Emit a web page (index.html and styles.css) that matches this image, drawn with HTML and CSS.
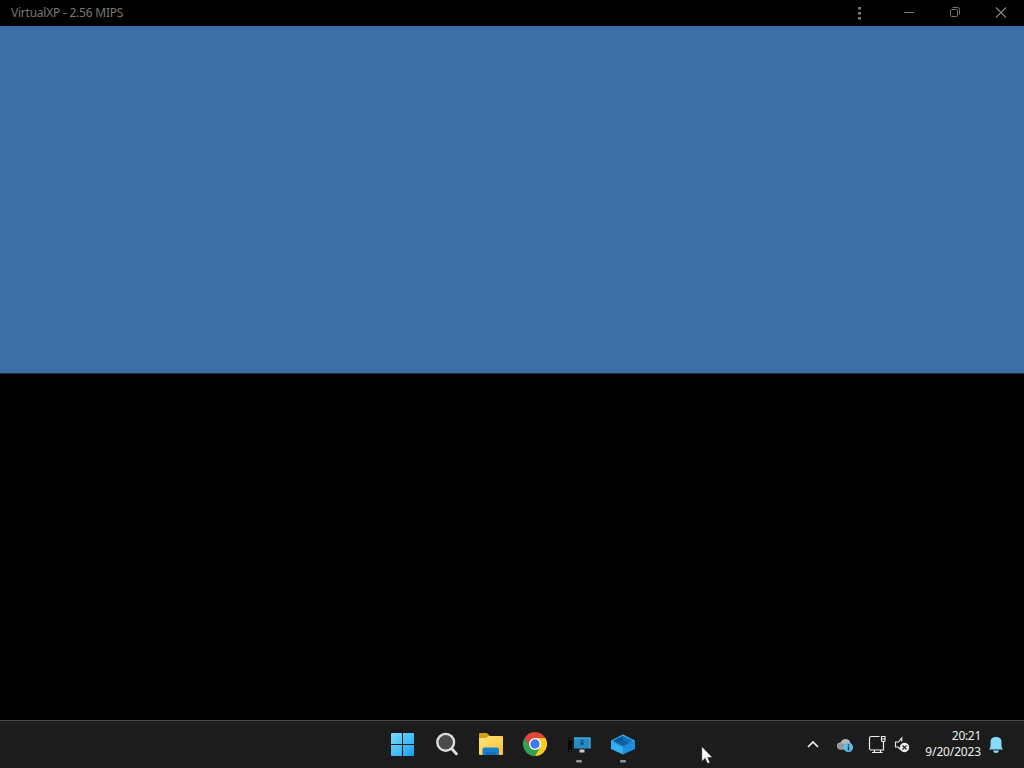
FILE: index.html
```html
<!DOCTYPE html>
<html lang="en">
<head>
<meta charset="utf-8">
<title>VirtualXP - 2.56 MIPS</title>
<link rel="stylesheet" href="styles.css">
</head>
<body>
<div class="desktop">
  <header class="titlebar">
    <span class="title">VirtualXP - 2.56 MIPS</span>
    <div class="controls">
      <svg class="control" viewBox="0 0 46 26"><g fill="#777"><rect x="22" y="7" width="3" height="2.6"/><rect x="22" y="12" width="3" height="2.6"/><rect x="22" y="17" width="3" height="2.6"/></g></svg>
      <svg class="control" viewBox="0 0 46 26"><path d="M18 12.5h10" stroke="#777"/></svg>
      <svg class="control" viewBox="0 0 46 26"><g fill="none" stroke="#777"><rect x="18.5" y="9.5" width="7" height="7" rx="1.2"/><path d="M20.5 7.5h5a2 2 0 0 1 2 2v5"/></g></svg>
      <svg class="control" viewBox="0 0 46 26"><path d="M18 7.5l10 10m0-10l-10 10" stroke="#858585" stroke-width="1.1"/></svg>
    </div>
  </header>
  <main class="screen"></main>
  <footer class="taskbar">
    <nav class="apps">
      <svg class="app" viewBox="0 0 44 47">
        <defs><linearGradient id="win" gradientUnits="userSpaceOnUse" x1="11" y1="12" x2="34" y2="35"><stop offset="0" stop-color="#7ddcfb"/><stop offset="1" stop-color="#159ff0"/></linearGradient></defs>
        <path fill="url(#win)" d="M11 13q0-1 1-1h10v11H11zM23 12h10q1 0 1 1v10H23zM11 24h11v11H12q-1 0-1-1zM23 24h11v10q0 1-1 1H23z"/>
      </svg>
      <svg class="app" viewBox="0 0 44 47">
        <circle cx="21.7" cy="21.3" r="8.4" fill="#4a4a4a" stroke="#dedede" stroke-width="2.4"/>
        <path d="M28 28l4.3 4.8" stroke="#dedede" stroke-width="2.9" stroke-linecap="round"/>
      </svg>
      <svg class="app" viewBox="0 0 44 47">
        <defs><linearGradient id="folder" x2="1" y2="1"><stop stop-color="#ffe37b"/><stop offset="1" stop-color="#f8c236"/></linearGradient></defs>
        <path fill="#d69c16" d="M11 13q0-1 1-1h6q1 0 2 1l2 2v5H11z"/>
        <path fill="url(#folder)" d="M11 17h7l2.5-2H34q1 0 1 1v17q0 1-1 1H12q-1 0-1-1z"/>
        <path fill="#1780cf" d="M14.5 34v-5.500q0-2 2-2h12.500q2 0 2 2V34z"/>
        <path fill="#116fbb" d="M18 34v-2q0-1 1-1h8q1 0 1 1v2z"/>
      </svg>
      <svg class="app" viewBox="0 0 44 47">
        <path fill="#dd4638" d="M12.6 17A12 12 0 0 1 33.4 17H23L17 26z"/>
        <path fill="#31a350" d="M12.6 17A12 12 0 0 0 23 35L28.2 26L17.8 26z"/>
        <path fill="#fbca25" d="M33.4 17A12 12 0 0 1 23 35L28.2 26L23 17z"/>
        <circle cx="23" cy="23" r="6" fill="#fff"/><circle cx="23" cy="23" r="4.7" fill="#3b7ded"/>
      </svg>
      <svg class="app" viewBox="0 0 44 47">
        <rect x="12" y="17" width="4" height="14" fill="#050607"/>
        <path d="M13 18.5h2.5M13 29.500h2" stroke="#343b40"/>
        <path fill="#268ac4" d="M18 16.500h16.500v11H18z"/><path fill="#4bb0dc" d="M18 16.500h16.500v1.200H18zM33.500 17h1v10.500h-1z"/>
        <circle cx="26" cy="20" r="1.200" fill="#11507c"/><path d="M24.300 21.500h3.400v2.200h-3.400z" fill="#11507c"/>
        <rect x="23.500" y="28.500" width="5" height="3" fill="#c5cccf"/>
        <rect x="20" y="39" width="6" height="2.600" rx="1.300" fill="#969696"/>
      </svg>
      <svg class="app" viewBox="0 0 44 47">
        <path fill="#42b4f1" d="M11 19.500L23 13.500l12 6L23 26.500z"/>
        <path fill="#07589e" d="M13 19.500L23 14.700v5.300l-6.500 2z"/>
        <path fill="#0f75c4" d="M23 14.700l10 4.800-3.500 2.500-6.500-2z"/>
        <path fill="#105f9f" d="M16.500 22l6.500-3 6.500 3-6.500 3.500z"/>
        <path fill="#30b2f5" d="M11 19.500l12 7v7L11 28z"/>
        <path fill="#1d8ee0" d="M35 19.500l-12 7v7L35 28z"/>
        <rect x="20" y="39" width="6" height="2.600" rx="1.300" fill="#969696"/>
      </svg>
    </nav>
    <div class="tray">
      <svg class="tray-chevron" viewBox="0 0 24 47"><path d="M8 26l5-5 5 5" fill="none" stroke="#eee" stroke-width="1.7"/></svg>
      <svg class="tray-cloud" viewBox="0 0 24 47">
        <path fill="#b5b8ba" d="M4 28.500q-3-1-3-4 0-3 3.500-3 1.500-3.500 5-3.500 4 0 5 4 1 6.500-5 6.500z"/><path fill="#94989a" d="M3 22.500q3-1 6 1l-3 5H4q-3-1-3-3.500z"/>
        <circle cx="12.400" cy="26.400" r="4.700" fill="#5cbeea"/><path d="M12.500 25.500v3.700M12.500 23.200v1.400" stroke="#10354c" stroke-width="1.500"/>
      </svg>
      <svg class="tray-network" viewBox="0 0 26 47">
        <g fill="none" stroke="#ededed" stroke-width="1.200"><path d="M13.500 15.500H5q-1.500 0-1.500 1.500v10.500q0 1.500 1.500 1.500h12.500V21M8.500 29v2.500M14.500 29v2.500M6 31.500h10.500"/><path d="M15.500 15.500h3.500v4q0 1-1 1h-1.500q-1 0-1-1zM15.500 18h3.500"/></g>
      </svg>
      <svg class="tray-sound" viewBox="0 0 24 47">
        <path d="M9.700 20.500v-3.500L6.500 21h-3v5H6l2.500 2.500" fill="none" stroke="#e2e2e2" stroke-width="1.200"/>
        <circle cx="12.500" cy="26.500" r="4.700" fill="#eee"/><path d="M10.500 24.500l4 4m0-4l-4 4" stroke="#222" stroke-width="1.100"/>
      </svg>
      <div class="clock"><span class="time">20:21</span><span class="date">9/20/2023</span></div>
      <svg class="bell" viewBox="0 0 43 47"><path fill="#86dcf7" d="M8 28.500q1.500-1.500 1.500-4V21q0-5 5.500-5t5.500 5v3.500q0 2.500 1.500 4zM12 29.500h6q-.5 2.500-3 2.500t-3-2.500z"/></svg>
    </div>
    <svg class="cursor" viewBox="0 0 12 18"><path fill="#fff" stroke="#111" stroke-width=".5" d="M.8 .5v15l3.400-3.200 2.300 5.200 2.400-1-2.200-5h4.800z"/></svg>
  </footer>
</div>
</body>
</html>
```
FILE: styles.css
```css
* { box-sizing: border-box; }
body { margin: 0; background: #000; font-family: "Noto Sans", "Open Sans", sans-serif; overflow: hidden; }
svg { display: block; flex: none; }
.desktop { display: flex; flex-direction: column; width: 1024px; height: 768px; }
.titlebar { display: flex; justify-content: space-between; height: 26px; padding-left: 11px; color: #777; }
.title { font-size: 12px; line-height: 25px; letter-spacing: -0.23px; white-space: nowrap; }
.controls { display: flex; }
.control { width: 46px; height: 26px; }
.control:first-child { margin-right: 4px; }
.screen { height: 348px; background: #3a6ea5; border-bottom: 1px solid #1c2c3d; }
.taskbar { position: relative; display: flex; justify-content: space-between; height: 48px; margin-top: auto; padding-left: 380px; background: #1c1c1c; border-top: 1px solid #484848; }
.apps, .tray { display: flex; }
.app { width: 44px; height: 47px; }
.tray-chevron, .tray-cloud, .tray-sound { width: 24px; height: 47px; }
.tray-cloud { margin-left: 12px; }
.tray-network { width: 26px; height: 47px; margin-left: 6px; }
.clock { display: flex; flex-direction: column; align-items: flex-end; width: 65px; padding-top: 7px; color: #eee; font-size: 12px; line-height: 16px; }
.time { letter-spacing: -0.3px; }
.date { letter-spacing: -0.15px; }
.bell { width: 43px; height: 47px; }
.cursor { position: absolute; left: 701px; top: 25px; width: 12px; height: 18px; }
```
